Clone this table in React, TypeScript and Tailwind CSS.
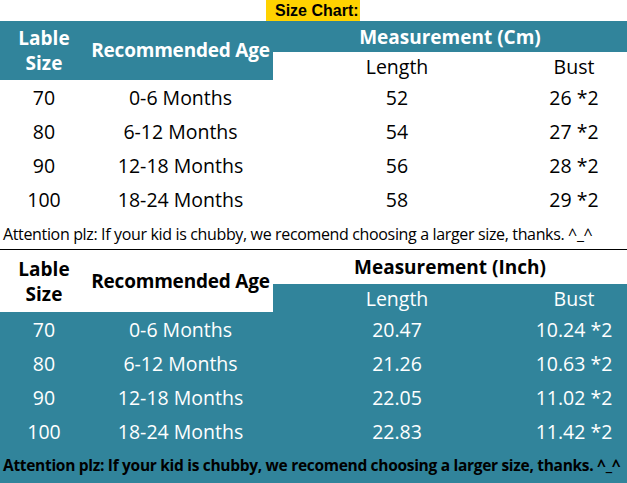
import React from "react";

const rows1 = [
  ["70", "0-6 Months", "52", "26 *2"],
  ["80", "6-12 Months", "54", "27 *2"],
  ["90", "12-18 Months", "56", "28 *2"],
  ["100", "18-24 Months", "58", "29 *2"],
];
const rows2 = [
  ["70", "0-6 Months", "20.47", "10.24 *2"],
  ["80", "6-12 Months", "21.26", "10.63 *2"],
  ["90", "12-18 Months", "22.05", "11.02 *2"],
  ["100", "18-24 Months", "22.83", "11.42 *2"],
];

const cols = "grid grid-cols-[88px_185px_248px_106px]";
const font = { fontFamily: '"Open Sans", "Noto Sans", sans-serif' };

export default function App() {
  return (
    <div className="w-[627px] h-[483px] overflow-hidden bg-white text-black" style={font}>
      {/* title */}
      <div className="flex h-[21px]">
        <div className="w-[266px]" />
        <div
          className="w-[94px] h-[21px] bg-[#FFD200] pl-[9px] text-[16px] font-bold leading-[22px]"
          style={{ fontFamily: '"Liberation Sans", Arial, sans-serif' }}
        >
          Size Chart:
        </div>
      </div>

      {/* table 1 header */}
      <div className={`${cols} grid-rows-[31px_28px]`}>
        <div className="row-span-2 bg-[#31849B] text-white font-bold text-[19px] leading-[25px] flex flex-col items-center justify-center">
          <span>Lable</span>
          <span>Size</span>
        </div>
        <div className="row-span-2 bg-[#31849B] text-white font-bold text-[19px] flex items-center justify-center whitespace-nowrap tracking-[-0.2px]">
          Recommended Age
        </div>
        <div className="col-span-2 bg-[#31849B] text-white font-bold text-[19px] flex items-center justify-center pt-[2px]">
          Measurement (Cm)
        </div>
        <div className="flex items-center justify-center text-[19.5px] pt-[2px]">Length</div>
        <div className="flex items-center justify-center text-[19.5px] pt-[2px]">Bust</div>
      </div>

      {/* table 1 rows */}
      {rows1.map((r) => (
        <div key={r[0]} className={`${cols} h-[34px] items-center text-[19.5px] pt-[2px]`}>
          {r.map((c, i) => (
            <div key={i} className="text-center">{c}</div>
          ))}
        </div>
      ))}
      <div className="h-[33px] flex items-center pl-[3px] text-[16px] whitespace-nowrap tracking-[-0.35px] pt-[2px]">
        Attention plz: If your kid is chubby, we recomend choosing a larger size, thanks. ^_^
      </div>
      <div className="h-[1px] bg-black" />

      {/* table 2 header */}
      <div className={`${cols} grid-rows-[34px_28px]`}>
        <div className="row-span-2 font-bold text-[19px] leading-[25px] flex flex-col items-center justify-center pt-[2px]">
          <span>Lable</span>
          <span>Size</span>
        </div>
        <div className="row-span-2 font-bold text-[19px] flex items-center justify-center whitespace-nowrap tracking-[-0.2px]">
          Recommended Age
        </div>
        <div className="col-span-2 font-bold text-[19px] flex items-center justify-center">
          Measurement (Inch)
        </div>
        <div className="bg-[#31849B] text-white flex items-center justify-center text-[19.5px] pt-[2px]">Length</div>
        <div className="bg-[#31849B] text-white flex items-center justify-center text-[19.5px] pt-[2px]">Bust</div>
      </div>

      <div className="bg-[#31849B] h-[171px]">
        {rows2.map((r) => (
          <div key={r[0]} className={`${cols} h-[34px] items-center text-[19.5px] text-white pt-[2px]`}>
            {r.map((c, i) => (
              <div key={i} className="text-center">{c}</div>
            ))}
          </div>
        ))}
        <div className="h-[34px] flex items-center pl-[3px] text-[15.5px] font-bold whitespace-nowrap tracking-[-0.3px] pt-[2px]">
          Attention plz: If your kid is chubby, we recomend choosing a larger size, thanks. ^_^
        </div>
      </div>
    </div>
  );
}
